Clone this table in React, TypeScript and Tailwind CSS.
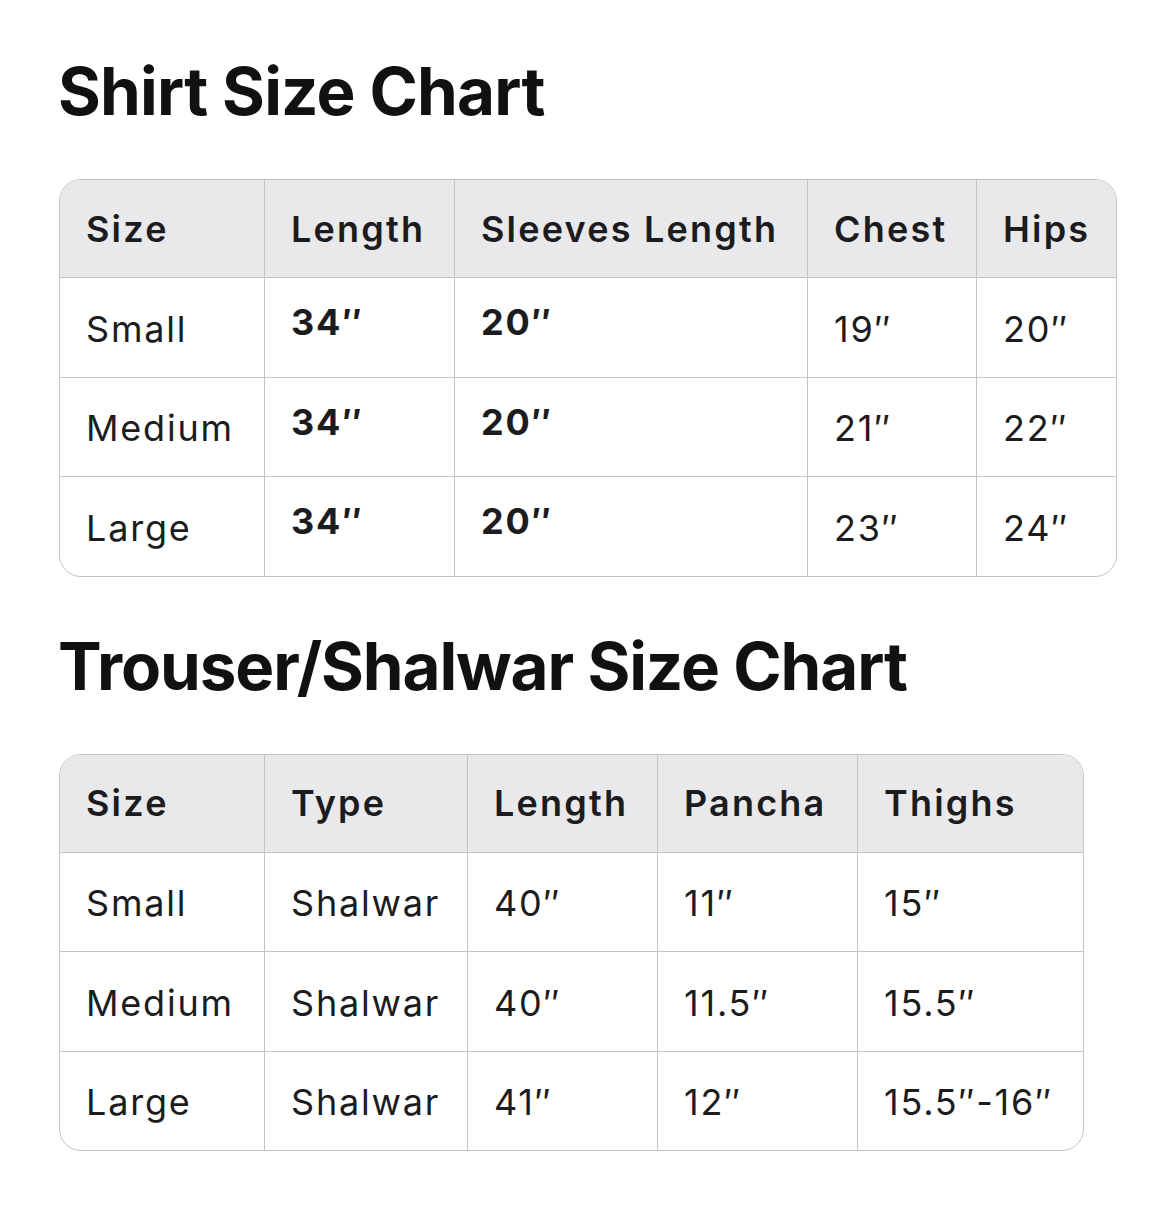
import React from 'react';

type Cell = { text: string; bold?: boolean };

const shirtCols = ['Size', 'Length', 'Sleeves Length', 'Chest', 'Hips'];
const shirtRows: Cell[][] = [
  [{ text: 'Small' }, { text: '34″', bold: true }, { text: '20″', bold: true }, { text: '19″' }, { text: '20″' }],
  [{ text: 'Medium' }, { text: '34″', bold: true }, { text: '20″', bold: true }, { text: '21″' }, { text: '22″' }],
  [{ text: 'Large' }, { text: '34″', bold: true }, { text: '20″', bold: true }, { text: '23″' }, { text: '24″' }],
];

const trouserCols = ['Size', 'Type', 'Length', 'Pancha', 'Thighs'];
const trouserRows: Cell[][] = [
  [{ text: 'Small' }, { text: 'Shalwar' }, { text: '40″' }, { text: '11″' }, { text: '15″' }],
  [{ text: 'Medium' }, { text: 'Shalwar' }, { text: '40″' }, { text: '11.5″' }, { text: '15.5″' }],
  [{ text: 'Large' }, { text: 'Shalwar' }, { text: '41″' }, { text: '12″' }, { text: '15.5″-16″' }],
];

const SizeTable = ({ cols, rows, grid }: { cols: string[]; rows: Cell[][]; grid: string }) => {
  return (
    <div className="rounded-[22px] border-[1.5px] border-[#c4c4c6] overflow-hidden">
      <div className={`grid ${grid} bg-[#e9e9eb]`}>
        {cols.map((c, i) => (
          <div
            key={c}
            className={`h-[97px] flex items-center pl-[26px] font-semibold text-[36px] tracking-[2.2px] whitespace-nowrap text-[#1c1c1e] ${
              i > 0 ? 'border-l-[1.5px] border-[#c4c4c6]' : ''
            }`}
          >
            {c}
          </div>
        ))}
      </div>
      {rows.map((row, r) => (
        <div key={r} className={`grid ${grid} border-t-[1.5px] border-[#c4c4c6]`}>
          {row.map((cell, i) => (
            <div
              key={i}
              className={`h-[98.5px] flex pl-[26px] text-[36px] tracking-[1.8px] whitespace-nowrap text-[#1c1c1e] ${
                cell.bold ? 'items-start pt-[17px] font-bold' : 'items-center pt-[3px]'
              } ${i > 0 ? 'border-l-[1.5px] border-[#c4c4c6]' : ''}`}
            >
              {cell.text}
            </div>
          ))}
        </div>
      ))}
    </div>
  );
};

const App = () => {
  return (
    <div className="bg-white min-h-[1227px] w-[1165px] pl-[59px] pt-[52px] font-['Inter',sans-serif]">
      <h1 className="text-[65.5px] leading-[80px] font-bold tracking-[-0.8px] text-[#111111] ml-[-1px]">
        Shirt Size Chart
      </h1>
      <div className="mt-[47px] w-[1058px]">
        <SizeTable
          cols={shirtCols}
          rows={shirtRows}
          grid="grid-cols-[204px_190px_353px_169px_1fr]"
        />
      </div>
      <h1 className="mt-[50px] text-[65.5px] leading-[80px] font-bold tracking-[-1.1px] text-[#111111] ml-[-1px]">
        Trouser/Shalwar Size Chart
      </h1>
      <div className="mt-[47px] w-[1025px]">
        <SizeTable
          cols={trouserCols}
          rows={trouserRows}
          grid="grid-cols-[204px_203px_190px_200px_1fr]"
        />
      </div>
    </div>
  );
};

export default App;
